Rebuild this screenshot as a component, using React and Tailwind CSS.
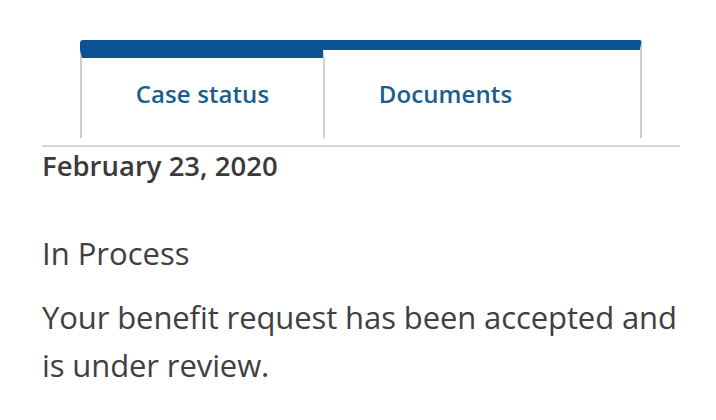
const tabs = [
  { name: "Case status", active: true },
  { name: "Documents", active: false },
];

const App = () => {
  return (
    <div
      className="w-[716px] h-[420px] bg-white pt-[40px] pl-[42px] pr-[36px]"
      style={{ fontFamily: "'Open Sans', Lato, sans-serif" }}
    >
      {/* Tabs */}
      <div className="ml-[38px] w-[562px] h-[98px] flex border-t-[10px] border-r-2 border-t-[#0b5394] border-r-[#cfcfcf] rounded-t-[3px]">
        {tabs.map((tab) => (
          <div
            key={tab.name}
            className={`w-[243px] h-full flex items-center justify-center pb-[8px] border-l-2 border-l-[#cfcfcf] border-t-8 ${
              tab.active ? "border-t-[#0b5394]" : "border-t-transparent"
            }`}
          >
            <span className="text-[24px] font-semibold tracking-[0.1px] text-[#1b5e8c]">{tab.name}</span>
          </div>
        ))}
      </div>
      <div className="mt-[7px] h-[2px] bg-[#d6d6d6]" />

      {/* Status */}
      <div className="mt-[1px] text-[27.5px] leading-[36px] font-semibold text-[#3a3a3a]">
        February 23, 2020
      </div>
      <div className="mt-[49px] text-[31px] leading-[40px] font-normal text-[#404040]">
        In Process
      </div>
      <p className="mt-[20px] -mr-[4px] text-[31px] leading-[48px] font-normal tracking-[-0.1px] text-[#404040]">
        Your benefit request has been accepted and is under review.
      </p>
    </div>
  );
};

export default App;
